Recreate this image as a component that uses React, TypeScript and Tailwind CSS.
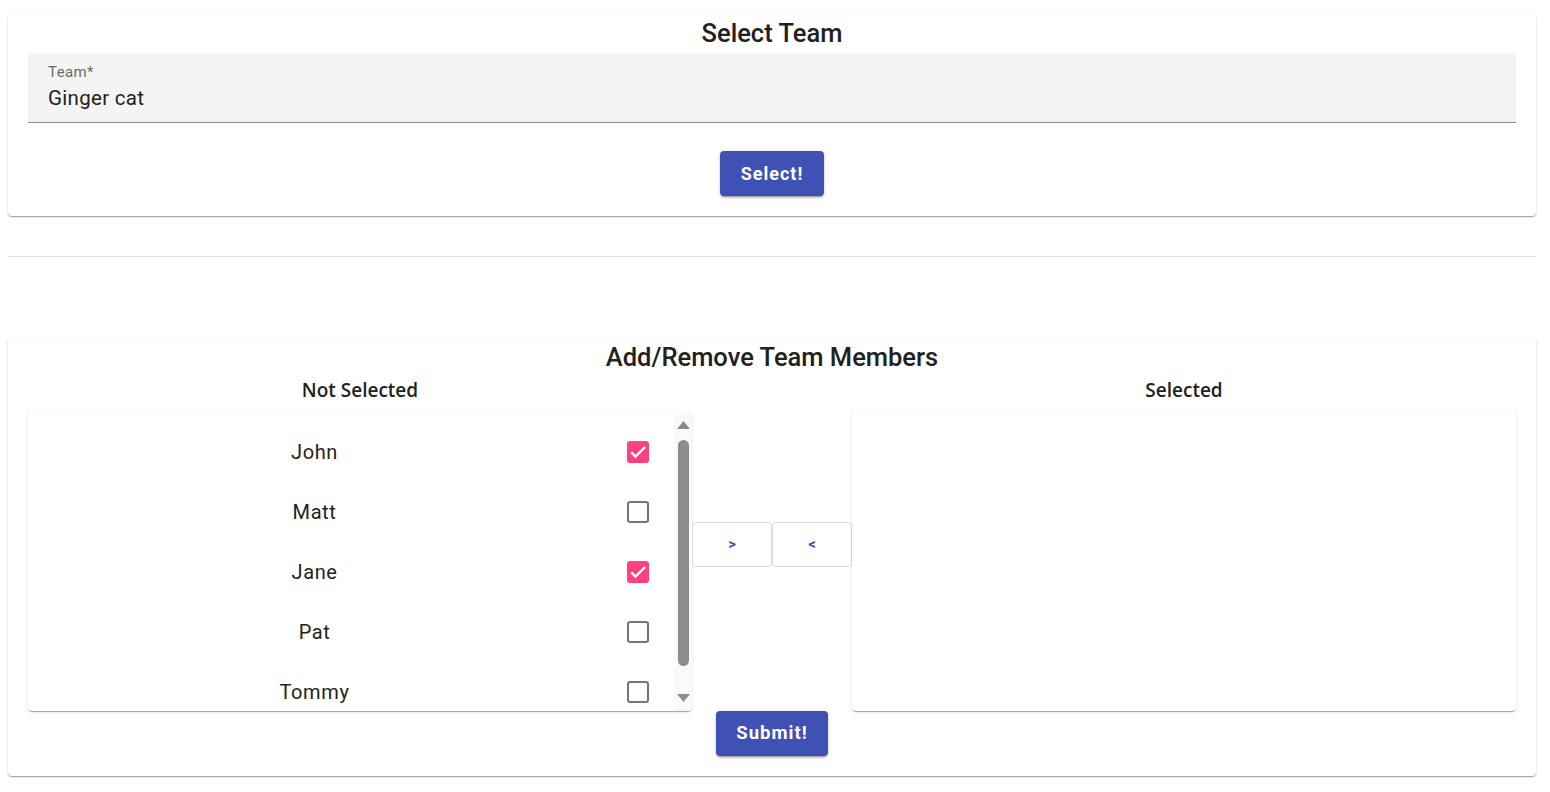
import React from "react";

const members = [
  { name: "John", checked: true },
  { name: "Matt", checked: false },
  { name: "Jane", checked: true },
  { name: "Pat", checked: false },
  { name: "Tommy", checked: false },
];

const Checkbox = ({ checked }: { checked: boolean }) =>
  checked ? (
    <div className="flex h-[22px] w-[22px] items-center justify-center rounded-[3px] bg-[#ff4081]">
      <svg width="20" height="20" viewBox="0 0 24 24">
        <path d="M4 12.5l5 5L20.5 6" fill="none" stroke="white" strokeWidth="2.8" />
      </svg>
    </div>
  ) : (
    <div className="h-[22px] w-[22px] rounded-[3px] border-2 border-[#757575] bg-white" />
  );

const Card = ({ children }: { children: React.ReactNode }) => (
  <div className="rounded bg-white shadow-[0_2px_1px_-1px_rgba(0,0,0,0.2),0_1px_1px_0_rgba(0,0,0,0.14),0_1px_3px_0_rgba(0,0,0,0.12)]">
    {children}
  </div>
);

const panelShadow =
  "rounded bg-white shadow-[0_2px_1px_-1px_rgba(0,0,0,0.2),0_1px_1px_0_rgba(0,0,0,0.14),0_1px_3px_0_rgba(0,0,0,0.12)]";

const FakeScrollbar = () => (
  <div className="flex w-[18px] flex-col items-center bg-[#fafafa] pt-[10px] pb-[9px]">
    <svg width="13" height="8" viewBox="0 0 13 8">
      <path d="M6.5 0L13 8H0z" fill="#8c8c8c" />
    </svg>
    <div className="mt-[11px] h-[226px] w-[11px] rounded-full bg-[#8c8c8c]" />
    <div className="flex-1" />
    <svg width="13" height="8" viewBox="0 0 13 8">
      <path d="M0 0H13L6.5 8z" fill="#8c8c8c" />
    </svg>
  </div>
);

export default function App() {
  return (
    <div className="min-h-screen bg-white pl-2 pr-[14px] pt-[13px] font-['Roboto',sans-serif] text-[#212121]">
      <Card>
        <div className="flex h-[40px] items-center justify-center text-[25.5px] font-medium">Select Team</div>
        <div className="mx-5 flex h-[70px] flex-col rounded-t border-b border-[#8a8a8a] bg-[#f4f4f4] px-5 pt-[10px]">
          <div className="text-[15px] leading-[18px] tracking-[0.4px] text-[#6b6b6b]">Team*</div>
          <div className="mt-[5px] text-[20.5px] leading-[24px] tracking-[0.3px] text-[#222]">Ginger cat</div>
        </div>
        <div className="flex justify-center pt-[28px] pb-5">
          <button className="h-[45px] w-[104px] rounded bg-[#3f51b5] text-[18px] font-bold tracking-[1px] text-white shadow-[0_3px_1px_-2px_rgba(0,0,0,0.2),0_2px_2px_0_rgba(0,0,0,0.14),0_1px_5px_0_rgba(0,0,0,0.12)]">
            Select!
          </button>
        </div>
      </Card>

      <hr className="mt-10 border-t border-[#e2e2e2]" />

      <div className="mt-20">
        <Card>
          <div className="flex h-[40px] items-center justify-center text-[25.5px] font-medium">
            Add/Remove Team Members
          </div>
          <div className="flex px-5">
            <div className="flex w-[664px] flex-col">
              <div className="flex h-[26px] items-center justify-center font-['Open_Sans',sans-serif] text-[19px] font-semibold text-[#222]">
                Not Selected
              </div>
              <div className={`mt-[8px] flex h-[300px] overflow-hidden ${panelShadow}`}>
                <div className="flex-1 pt-[11px]">
                  {members.map((m) => (
                    <div key={m.name} className="flex h-[60px] items-center">
                      <div className="flex-1 text-center text-[20px] tracking-[0.6px] text-[#222]">{m.name}</div>
                      <div className="flex w-[73px] justify-center">
                        <Checkbox checked={m.checked} />
                      </div>
                    </div>
                  ))}
                </div>
                <FakeScrollbar />
              </div>
            </div>
            <div className="flex w-[160px] items-start pt-[145px]">
              <button className="h-[45px] w-[80px] rounded border border-[#dcdcdc] bg-white text-[15px] font-bold text-[#3f51b5]">
                &gt;
              </button>
              <button className="h-[45px] w-[80px] rounded border border-[#dcdcdc] bg-white text-[15px] font-bold text-[#3f51b5]">
                &lt;
              </button>
            </div>
            <div className="flex w-[664px] flex-col">
              <div className="flex h-[26px] items-center justify-center font-['Open_Sans',sans-serif] text-[19px] font-semibold text-[#222]">
                Selected
              </div>
              <div className={`mt-[8px] h-[300px] ${panelShadow}`} />
            </div>
          </div>
          <div className="flex justify-center pb-5">
            <button className="h-[45px] w-[112px] rounded bg-[#3f51b5] text-[18.5px] font-bold tracking-[1px] text-white shadow-[0_3px_1px_-2px_rgba(0,0,0,0.2),0_2px_2px_0_rgba(0,0,0,0.14),0_1px_5px_0_rgba(0,0,0,0.12)]">
              Submit!
            </button>
          </div>
        </Card>
      </div>
    </div>
  );
}
